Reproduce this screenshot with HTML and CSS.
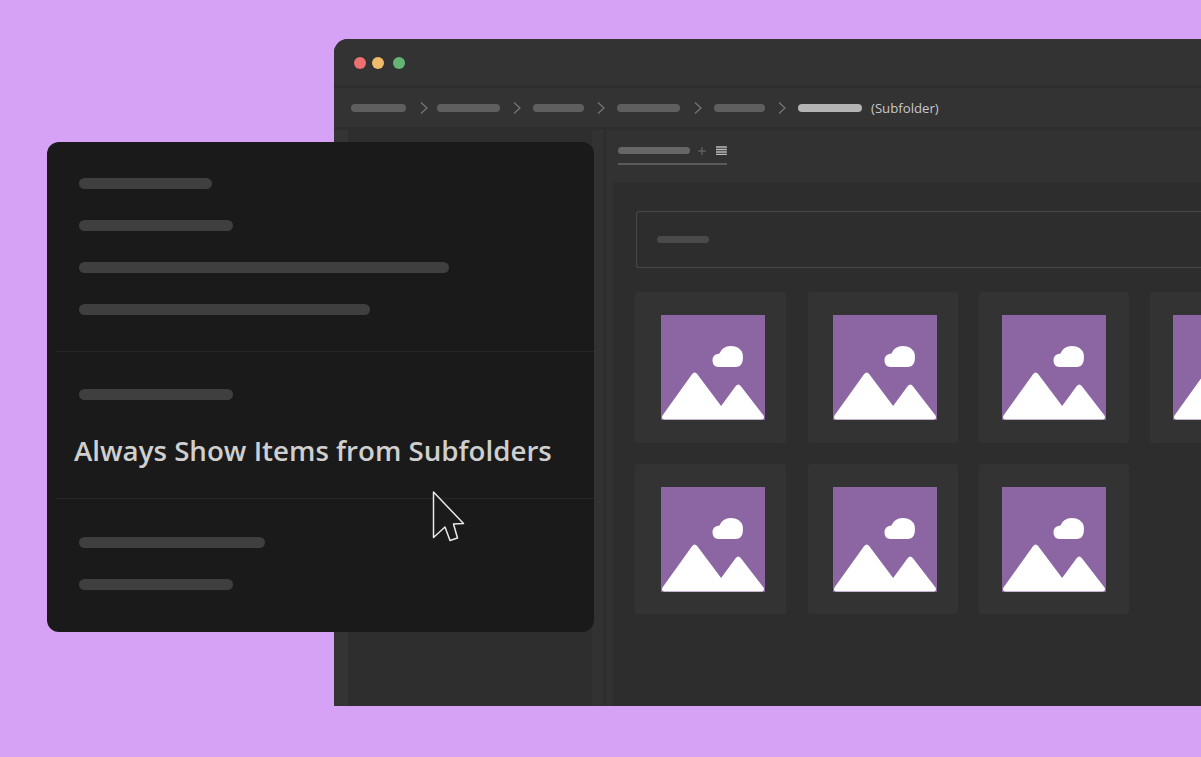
FILE: index.html
```html
<!DOCTYPE html>
<html lang="en">
<head>
    <meta charset="UTF-8">
    <title>Always Show Items from Subfolders</title>
    <link rel="stylesheet" href="styles.css">
</head>
<body>
    <svg class="defs" width="0" height="0">
        <symbol id="photo" viewBox="0 0 105 105" preserveAspectRatio="none">
            <rect width="105" height="105" fill="#8c66a3"/>
            <path d="M1.500 100.500 L31.500 59 Q34 56 36.500 59 L60.700 91 L75.500 71 Q78 68 80.500 71 L103.500 100.500 Q105 104 102 104.500 L3 104.500 Q0 104 1.500 100.500 Z" fill="#fff"/>
            <path d="M58 52 Q52 51.500 52 45.500 Q52 39 59 38.500 Q62 31 70.500 31 Q80 31 82.500 39 Q84 52 75 52 Z" fill="#fff"/>
        </symbol>
        <symbol id="chevron" viewBox="0 0 8 12">
            <path d="M1 .5 L7 6 L1 11.500" fill="none" stroke="#777" stroke-width="1.200"/>
        </symbol>
    </svg>

    <div class="window">
        <div class="titlebar">
            <span class="dot dot-red"></span>
            <span class="dot dot-yellow"></span>
            <span class="dot dot-green"></span>
        </div>
        <div class="crumbs">
            <span class="crumb crumb-first"></span>
            <svg class="chev chev-first"><use href="#chevron"/></svg>
            <span class="crumb crumb-long"></span>
            <svg class="chev"><use href="#chevron"/></svg>
            <span class="crumb crumb-short"></span>
            <svg class="chev"><use href="#chevron"/></svg>
            <span class="crumb crumb-long crumb-wide-gap"></span>
            <svg class="chev"><use href="#chevron"/></svg>
            <span class="crumb crumb-short"></span>
            <svg class="chev"><use href="#chevron"/></svg>
            <span class="crumb crumb-active"></span>
            <span class="crumb-label">(Subfolder)</span>
        </div>
        <div class="body">
            <div class="sidebar-edge"></div>
            <div class="sidebar"></div>
            <div class="sidebar-gutter"></div>
            <div class="content">
                <div class="tabs">
                    <div class="tab">
                        <span class="tab-pill"></span>
                        <svg class="tab-plus" width="8" height="8" viewBox="0 0 8 8">
                            <path d="M4 0v8M0 4h8" stroke="#6f6f6f" stroke-width="1"/>
                        </svg>
                        <svg class="tab-lines" width="11" height="9" viewBox="0 0 11 9">
                            <path d="M0 1h11M0 3.500h11M0 6h11M0 8.500h11" stroke="#bbb" stroke-width="1.600"/>
                        </svg>
                    </div>
                </div>
                <div class="panel">
                    <div class="search"><span class="search-pill"></span></div>
                    <div class="grid">
                        <div class="tile tile-a"><svg class="photo"><use href="#photo" width="100%" height="100%"/></svg></div>
                        <div class="tile tile-b"><svg class="photo"><use href="#photo" width="100%" height="100%"/></svg></div>
                        <div class="tile tile-c"><svg class="photo"><use href="#photo" width="100%" height="100%"/></svg></div>
                        <div class="tile tile-c"><svg class="photo"><use href="#photo" width="100%" height="100%"/></svg></div>
                        <div class="tile tile-a"><svg class="photo"><use href="#photo" width="100%" height="100%"/></svg></div>
                        <div class="tile tile-b"><svg class="photo"><use href="#photo" width="100%" height="100%"/></svg></div>
                        <div class="tile tile-c"><svg class="photo"><use href="#photo" width="100%" height="100%"/></svg></div>
                    </div>
                </div>
            </div>
        </div>
    </div>

    <div class="menu">
        <div class="menu-section menu-top">
            <span class="bar bar-133"></span>
            <span class="bar bar-154"></span>
            <span class="bar bar-370"></span>
            <span class="bar bar-291"></span>
        </div>
        <div class="menu-section menu-middle">
            <span class="bar bar-154"></span>
            <div class="menu-title">Always Show Items from Subfolders</div>
        </div>
        <div class="menu-section menu-bottom">
            <span class="bar bar-186"></span>
            <span class="bar bar-154"></span>
        </div>
    </div>

    <svg class="pointer" width="36" height="56" viewBox="0 0 36 56">
        <path d="M3.500 3 L33.500 34.500 L23.500 35 L27.500 49 L20 51.500 L15 38 L3.500 48.500 Z" fill="#1b1b1b" stroke="#e8e8e8" stroke-width="1.500" stroke-linejoin="round"/>
    </svg>
</body>
</html>
```

FILE: styles.css
```css
html, body {
    margin: 0;
    height: 100%;
}
body {
    background-color: #d6a2f5;
    font-family: "Open Sans", Arial, sans-serif;
    overflow: hidden;
    padding: 39px 0 0 334px;
    box-sizing: border-box;
    position: relative;
}
.defs {
    position: absolute;
}

/* app window */
.window {
    height: 667px;
    background-color: #2e2e2e;
    border-radius: 14px 0 0 0;
    overflow: hidden;
    display: flex;
    flex-direction: column;
}
.titlebar {
    height: 46px;
    background-color: #333333;
    display: flex;
    align-items: center;
    padding: 2px 0 0 20px;
    box-sizing: border-box;
}
.dot {
    width: 12px;
    height: 12px;
    border-radius: 50%;
    margin-right: 6px;
}
.dot-red {
    background-color: #ee7070;
}
.dot-yellow {
    background-color: #eebb6a;
    margin-right: 9px;
}
.dot-green {
    background-color: #62b573;
}
.crumbs {
    height: 39px;
    margin-top: 3px;
    background-color: #333333;
    display: flex;
    align-items: center;
    padding: 0 0 0 17px;
    box-sizing: border-box;
}
.crumb {
    height: 8px;
    border-radius: 4px;
    background-color: #5f5f5f;
    margin-top: 1px;
}
.crumb-first {
    width: 55px;
    margin-top: 0;
    margin-right: 14px;
}
.crumb-long {
    width: 63px;
    margin-right: 13px;
}
.crumb-wide-gap {
    margin-right: 14px;
}
.crumb-short {
    width: 51px;
    margin-right: 13px;
}
.crumb-active {
    width: 64px;
    background-color: #b4b4b4;
}
.crumb-label {
    margin-left: 9px;
    color: #c8c8c8;
    font-size: 13.2px;
    line-height: 16px;
}
.chev {
    width: 8px;
    height: 12px;
    margin-right: 12px;
    flex-shrink: 0;
}
.chev-first {
    margin-right: 9px;
}
.body {
    flex: 1;
    display: flex;
    margin-top: 3px;
}
.sidebar-edge {
    width: 14px;
    background-color: #343434;
}
.sidebar {
    width: 244px;
    background-color: #2e2e2e;
}
.sidebar-gutter {
    width: 12px;
    background-color: #323232;
    border-right: 2px solid #2c2c2c;
}
.content {
    flex: 1;
    background-color: #323232;
    display: flex;
    flex-direction: column;
    padding-left: 7px;
    min-width: 0;
}

/* tab strip */
.tabs {
    height: 52px;
    padding: 17px 0 0 5px;
    box-sizing: border-box;
}
.tab {
    width: 109px;
    height: 16px;
    border-bottom: 2px solid #5a5a5a;
    display: flex;
    align-items: flex-start;
}
.tab-pill {
    width: 73px;
    height: 7px;
    border-radius: 4px;
    background-color: #666666;
}
.tab-plus {
    margin-left: 8px;
}
.tab-lines {
    margin-left: 10px;
    margin-top: -1px;
}

/* thumbnails */
.panel {
    flex: 1;
    background-color: #2d2d2d;
    padding: 29px 0 0 22px;
    border-radius: 3px 0 0 0;
}
.search {
    height: 57px;
    border: 1px solid #484848;
    border-right: none;
    border-radius: 3px 0 0 3px;
    display: flex;
    align-items: center;
    padding-left: 20px;
    box-sizing: border-box;
    margin-left: 1px;
}
.search-pill {
    width: 52px;
    height: 7px;
    border-radius: 4px;
    background-color: #4a4a4a;
    margin-top: -1px;
}
.grid {
    display: grid;
    grid-template-columns: 173px 171px 171px 151px;
    grid-template-rows: 151px 150px;
    row-gap: 21px;
    margin-top: 24px;
}
.tile {
    background-color: #333333;
    border-radius: 3px;
    padding-top: 23px;
    box-sizing: border-box;
}
.tile-a {
    width: 151px;
    padding-left: 26px;
}
.tile-b {
    width: 150px;
    padding-left: 25px;
}
.tile-c {
    width: 150px;
    padding-left: 23px;
}
.photo {
    display: block;
    width: 104px;
    height: 105px;
}

/* context menu over the window */
.menu {
    position: absolute;
    left: 47px;
    top: 142px;
    width: 547px;
    height: 490px;
    background-color: #1a1a1a;
    border-radius: 12px;
}
.menu-section {
    display: flex;
    flex-direction: column;
    align-items: flex-start;
    padding-left: 32px;
}
.menu-top {
    gap: 31px;
    padding-top: 36px;
    height: 209px;
    box-sizing: border-box;
}
.menu-middle {
    height: 148px;
    padding-top: 37px;
    box-sizing: border-box;
    border-top: 1px solid #262626;
    border-bottom: 1px solid #262626;
    margin-left: 9px;
    padding-left: 23px;
}
.menu-bottom {
    gap: 31px;
    padding-top: 38px;
}
.bar {
    height: 11px;
    border-radius: 6px;
    background-color: #3f3f3f;
}
.bar-133 {
    width: 133px;
}
.bar-154 {
    width: 154px;
}
.bar-186 {
    width: 186px;
}
.bar-291 {
    width: 291px;
}
.bar-370 {
    width: 370px;
}
.menu-title {
    margin: 30px 0 0 -5px;
    color: #cfcfcf;
    font-size: 27.7px;
    font-weight: 600;
    line-height: 40px;
    white-space: nowrap;
}
.pointer {
    position: absolute;
    left: 430px;
    top: 489px;
}
```
